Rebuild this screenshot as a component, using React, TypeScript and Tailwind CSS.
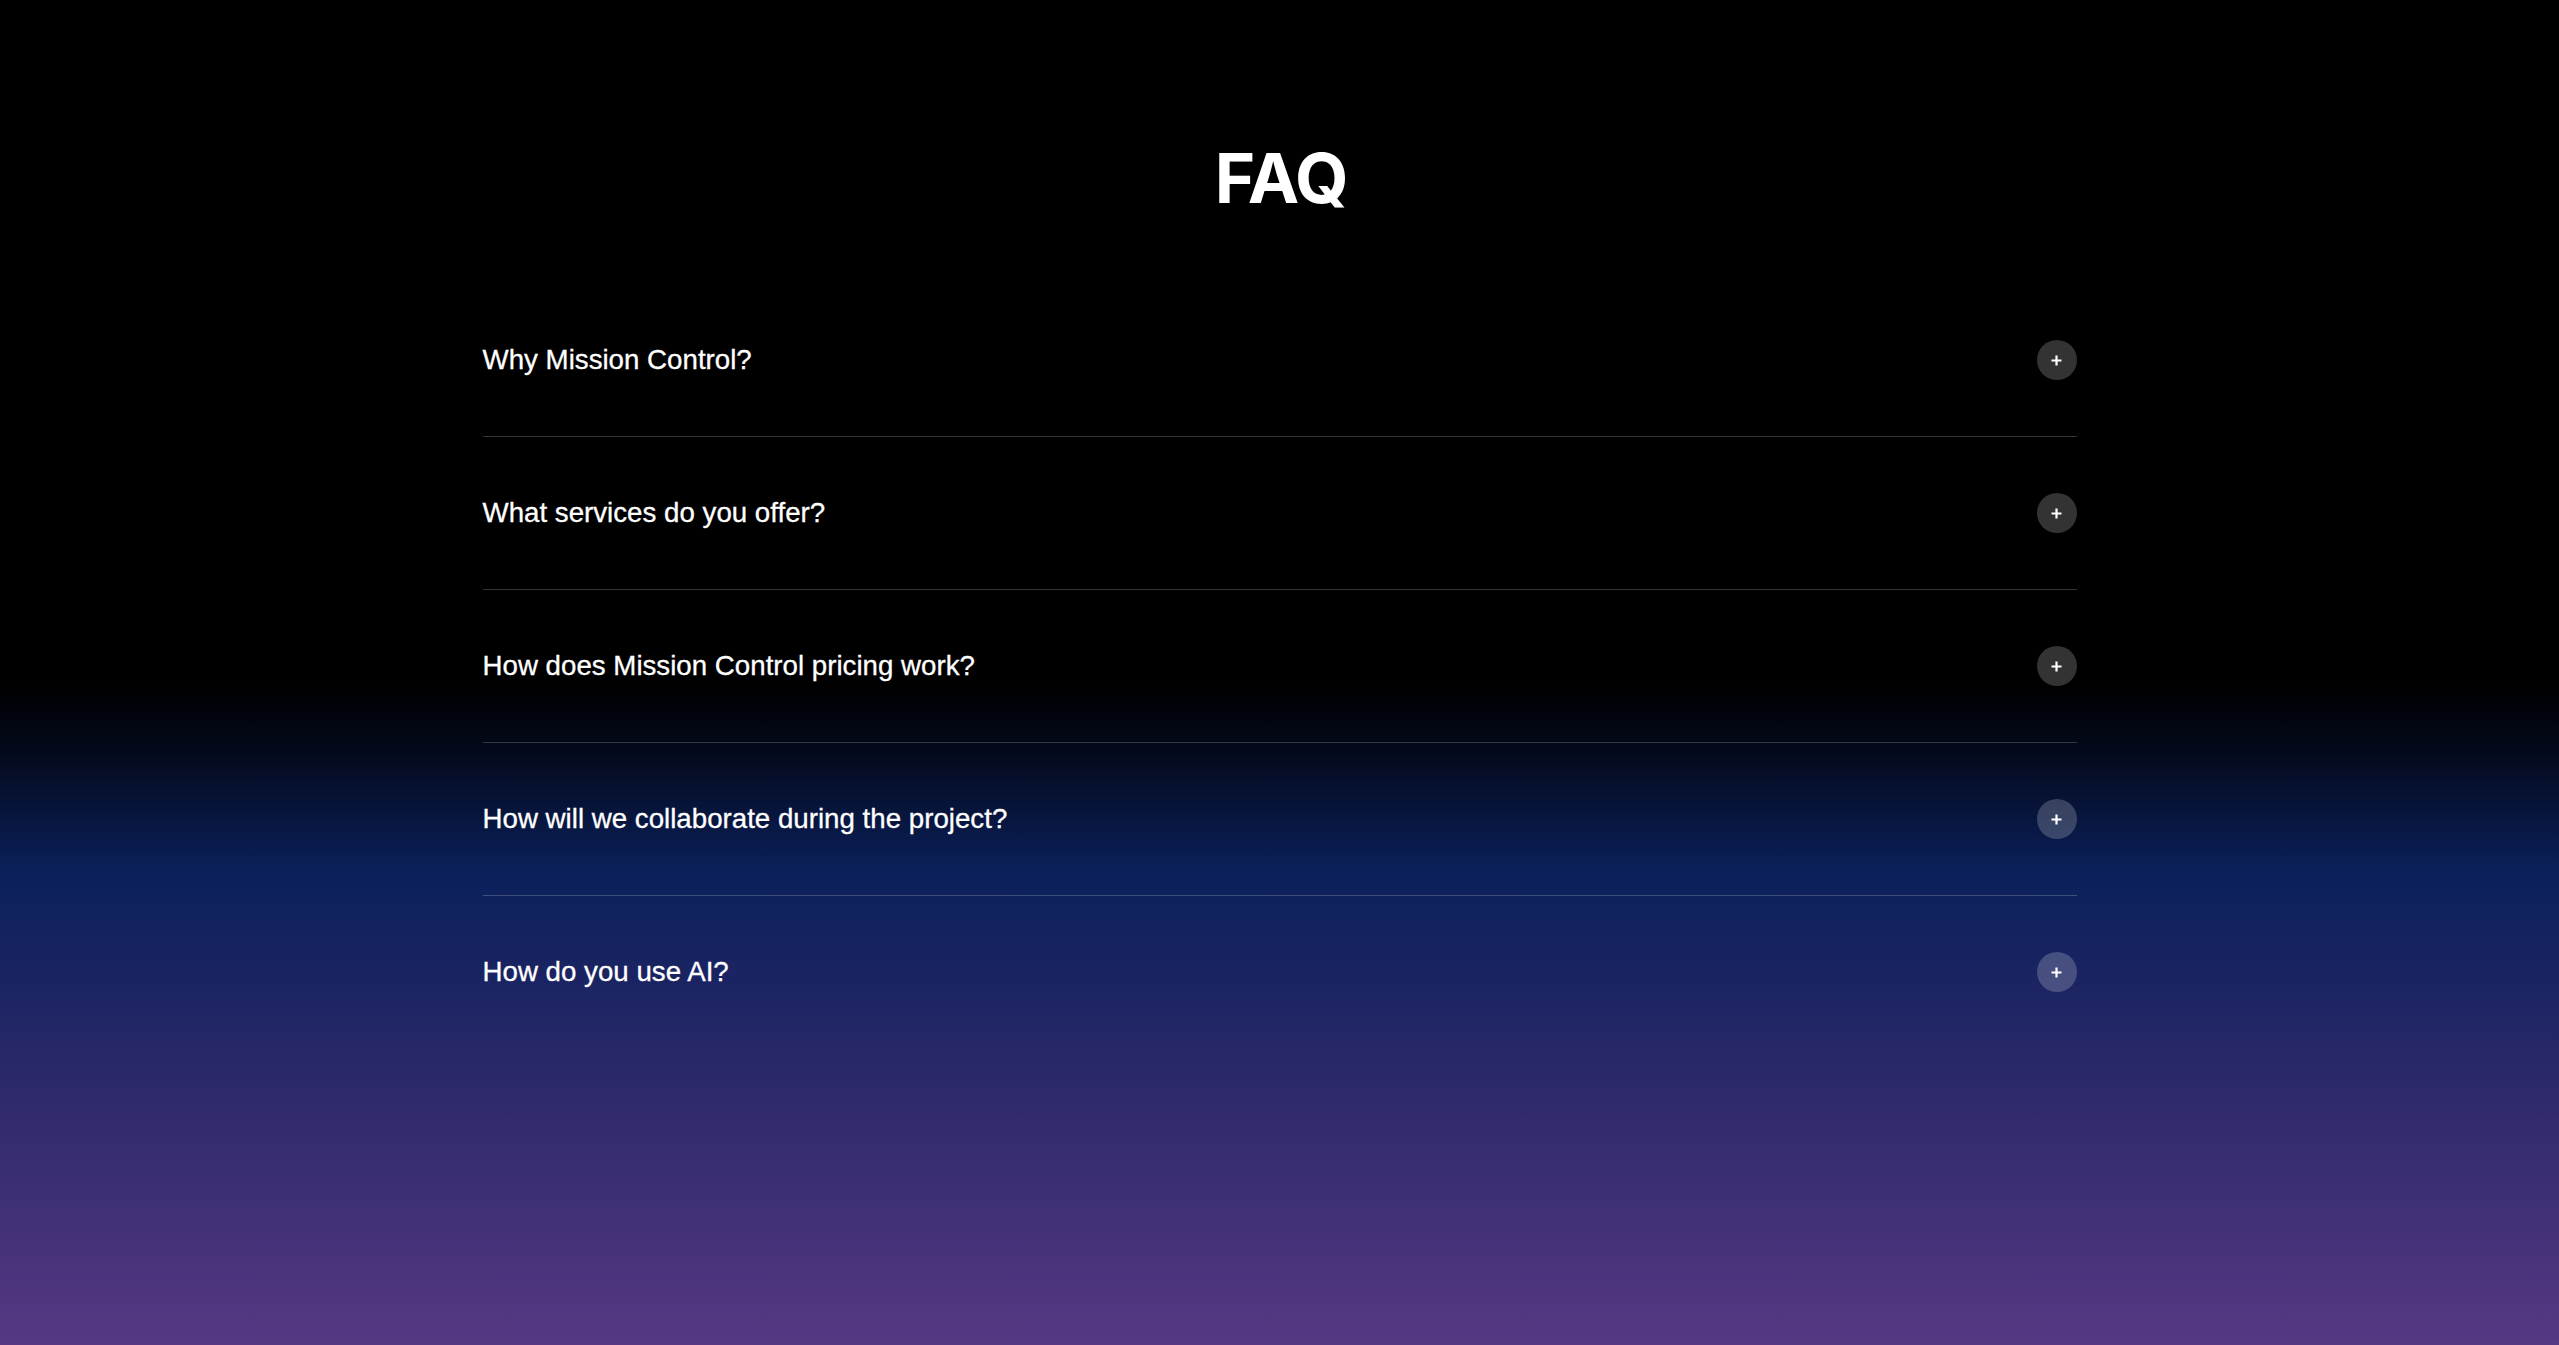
import React from "react";

const questions = [
  "Why Mission Control?",
  "What services do you offer?",
  "How does Mission Control pricing work?",
  "How will we collaborate during the project?",
  "How do you use AI?",
];

function PlusIcon() {
  return (
    <svg width="13" height="13" viewBox="0 0 13 13" fill="none" aria-hidden="true">
      <path d="M6.5 1.5v10M1.5 6.5h10" stroke="white" strokeWidth="2.2" />
    </svg>
  );
}

export default function App() {
  return (
    <div
      className="min-h-screen w-full text-white bg-[linear-gradient(180deg,#000000_0%,#000000_51%,#050c24_57%,#0b215c_65%,#1b2462_73%,#2f2a6c_82%,#563883_100%)]"
      style={{ fontFamily: '"Liberation Sans", Arial, sans-serif' }}
    >
      <section className="mx-auto w-[1594px] pt-[144px] pb-[200px]">
        <h1
          className="text-center text-[69px] leading-none font-bold tracking-[-0.02em] mb-[71px] pl-[3px]"
          style={{ fontFamily: "Inter, sans-serif" }}
        >
          FAQ
        </h1>
        <div className="flex flex-col">
          {questions.map((q, i) => (
            <div
              key={q}
              className={`flex items-center justify-between py-[56px] ${
                i < questions.length - 1 ? "border-b border-white/20" : ""
              }`}
            >
              <span className="text-[27.7px] leading-none [-webkit-text-stroke:0.3px_white]">
                {q}
              </span>
              <button className="flex h-10 w-10 items-center justify-center rounded-full bg-white/20">
                <PlusIcon />
              </button>
            </div>
          ))}
        </div>
      </section>
    </div>
  );
}
